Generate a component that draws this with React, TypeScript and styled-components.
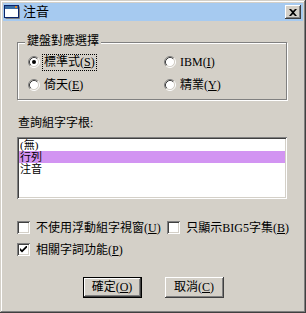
import React from 'react';
import styled, { createGlobalStyle } from 'styled-components';

const GlobalStyle = createGlobalStyle`
  html, body {
    margin: 0;
    padding: 0;
    background: #d4d0c8;
  }
  body {
    font-family: "Liberation Serif", "Noto Sans CJK TC", serif;
    font-size: 12px;
    color: #000;
  }
`;

const raised = `
  box-shadow: inset -1px -1px #404040, inset 1px 1px #fff,
    inset -2px -2px #808080, inset 2px 2px #d4d0c8;
`;

const sunken = `
  box-shadow: inset 1px 1px #808080, inset -1px -1px #fff,
    inset 2px 2px #404040, inset -2px -2px #d4d0c8;
`;

const Window = styled.div`
  width: 306px;
  height: 313px;
  box-sizing: border-box;
  padding: 3px;
  background: #d4d0c8;
  box-shadow: inset -1px -1px #404040, inset 1px 1px #d4d0c8,
    inset -2px -2px #808080, inset 2px 2px #fff;
  display: flex;
  flex-direction: column;
`;

const TitleBar = styled.div`
  height: 18px;
  background: #a6caf0;
  display: flex;
  align-items: center;
  padding: 0 2px 0 1px;
`;

const TitleText = styled.span`
  margin-left: 3px;
  flex: 1;
  font-size: 13px;
  line-height: 18px;
`;

const CloseButton = styled.div`
  width: 16px;
  height: 14px;
  background: #d4d0c8;
  ${raised}
  display: flex;
  align-items: center;
  justify-content: center;
`;

const Body = styled.div`
  padding: 0 14px;
  display: flex;
  flex-direction: column;
`;

const GroupBox = styled.div`
  position: relative;
  margin-top: 21px;
  width: 270px;
  box-sizing: border-box;
  border: 1px solid #808080;
  box-shadow: inset 1px 1px #fff, 1px 1px #fff;
  padding: 11px 0 6px 10px;
  display: grid;
  grid-template-columns: 136px 1fr;
  row-gap: 7px;
`;

const Caption = styled.span`
  position: absolute;
  top: -9px;
  left: 7px;
  padding: 0 2px;
  background: #d4d0c8;
  line-height: 14px;
`;

const OptionRow = styled.label`
  display: flex;
  align-items: center;
  gap: 3px;
  height: 16px;
`;

const OptionText = styled.span<{ $focused?: boolean }>`
  padding: 1px;
  line-height: 13px;
  outline: ${(p) => (p.$focused ? '1px dotted #000' : 'none')};
`;

const FieldLabel = styled.div`
  margin-top: 16px;
  line-height: 14px;
  padding-left: 1px;
`;

const ListBox = styled.div`
  margin-top: 7px;
  width: 270px;
  height: 62px;
  box-sizing: border-box;
  padding: 2px;
  background: #fff;
  ${sunken}
`;

const ListItem = styled.div<{ $selected?: boolean }>`
  font-size: 11px;
  line-height: 12px;
  height: 12px;
  padding-left: 1px;
  background: ${(p) => (p.$selected ? '#d294f2' : 'transparent')};
`;

const CheckLine = styled.div<{ $gap: number }>`
  margin-top: ${(p) => p.$gap}px;
  display: flex;
`;

const CheckItem = styled.label<{ $width?: number }>`
  display: flex;
  align-items: center;
  gap: 6px;
  height: 16px;
  white-space: nowrap;
  width: ${(p) => (p.$width ? `${p.$width}px` : 'auto')};
`;

const CheckBox = styled.span`
  width: 13px;
  height: 13px;
  flex: none;
  box-sizing: border-box;
  background: #fff;
  ${sunken}
  display: flex;
  align-items: center;
  justify-content: center;
`;

const ButtonRow = styled.div`
  margin-top: 20px;
  display: flex;
  justify-content: center;
  gap: 23px;
`;

const Button = styled.div<{ $default?: boolean }>`
  width: 59px;
  height: 21px;
  box-sizing: border-box;
  background: #d4d0c8;
  display: flex;
  align-items: center;
  justify-content: center;
  line-height: 13px;
  border: ${(p) => (p.$default ? '1px solid #000' : 'none')};
  ${raised}
`;

const WindowIcon = () => (
  <svg width="16" height="14" viewBox="0 0 16 14">
    <rect x="0.5" y="0.5" width="14" height="12" fill="#fff" stroke="#0a246a" />
    <rect x="1" y="1" width="13" height="3" fill="#3a6ea5" />
    <rect x="11" y="1" width="2" height="2" fill="#e08020" />
    <path d="M15.5 1.5 V13.5 H1.5" fill="none" stroke="#808080" />
  </svg>
);

const CloseGlyph = () => (
  <svg width="8" height="7" viewBox="0 0 8 7">
    <path d="M0 0 H2 L4 2 L6 0 H8 L5 3.5 L8 7 H6 L4 5 L2 7 H0 L3 3.5 Z" fill="#000" />
  </svg>
);

const Radio = ({ checked }: { checked?: boolean }) => (
  <svg width="12" height="12" viewBox="0 0 12 12">
    <circle cx="6" cy="6" r="4.5" fill="#fff" />
    <path d="M2.11 9.89 A5.5 5.5 0 0 1 9.89 2.11" fill="none" stroke="#808080" />
    <path d="M9.89 2.11 A5.5 5.5 0 0 1 2.11 9.89" fill="none" stroke="#fff" />
    <path d="M2.82 9.18 A4.5 4.5 0 0 1 9.18 2.82" fill="none" stroke="#404040" />
    <path d="M9.18 2.82 A4.5 4.5 0 0 1 2.82 9.18" fill="none" stroke="#d4d0c8" />
    {checked && <circle cx="6" cy="6" r="2" fill="#000" />}
  </svg>
);

const Check = () => (
  <svg width="7" height="7" viewBox="0 0 7 7">
    <path d="M0 2 L2 4 L7 -1 V1.5 L2 6.5 L0 4.5 Z" fill="#000" />
  </svg>
);

const options = [
  { text: '標準式', key: 'S', checked: true },
  { text: 'IBM', key: 'I' },
  { text: '倚天', key: 'E' },
  { text: '精業', key: 'Y' },
];

const roots = ['(無)', '行列', '注音'];

export default function App() {
  return (
    <>
      <GlobalStyle />
      <Window>
        <TitleBar>
          <WindowIcon />
          <TitleText>注音</TitleText>
          <CloseButton>
            <CloseGlyph />
          </CloseButton>
        </TitleBar>
        <Body>
          <GroupBox>
            <Caption>鍵盤對應選擇</Caption>
            {options.map((o) => (
              <OptionRow key={o.key}>
                <Radio checked={o.checked} />
                <OptionText $focused={o.checked}>
                  {o.text}(<u>{o.key}</u>)
                </OptionText>
              </OptionRow>
            ))}
          </GroupBox>

          <FieldLabel>查詢組字字根:</FieldLabel>
          <ListBox>
            {roots.map((r) => (
              <ListItem key={r} $selected={r === '行列'}>
                {r}
              </ListItem>
            ))}
          </ListBox>

          <CheckLine $gap={20}>
            <CheckItem $width={151}>
              <CheckBox />
              <span>
                不使用浮動組字視窗(<u>U</u>)
              </span>
            </CheckItem>
            <CheckItem>
              <CheckBox />
              <span>
                只顯示BIG5字集(<u>B</u>)
              </span>
            </CheckItem>
          </CheckLine>
          <CheckLine $gap={6}>
            <CheckItem>
              <CheckBox>
                <Check />
              </CheckBox>
              <span>
                相關字詞功能(<u>P</u>)
              </span>
            </CheckItem>
          </CheckLine>

          <ButtonRow>
            <Button $default>
              確定(<u>O</u>)
            </Button>
            <Button>
              取消(<u>C</u>)
            </Button>
          </ButtonRow>
        </Body>
      </Window>
    </>
  );
}
